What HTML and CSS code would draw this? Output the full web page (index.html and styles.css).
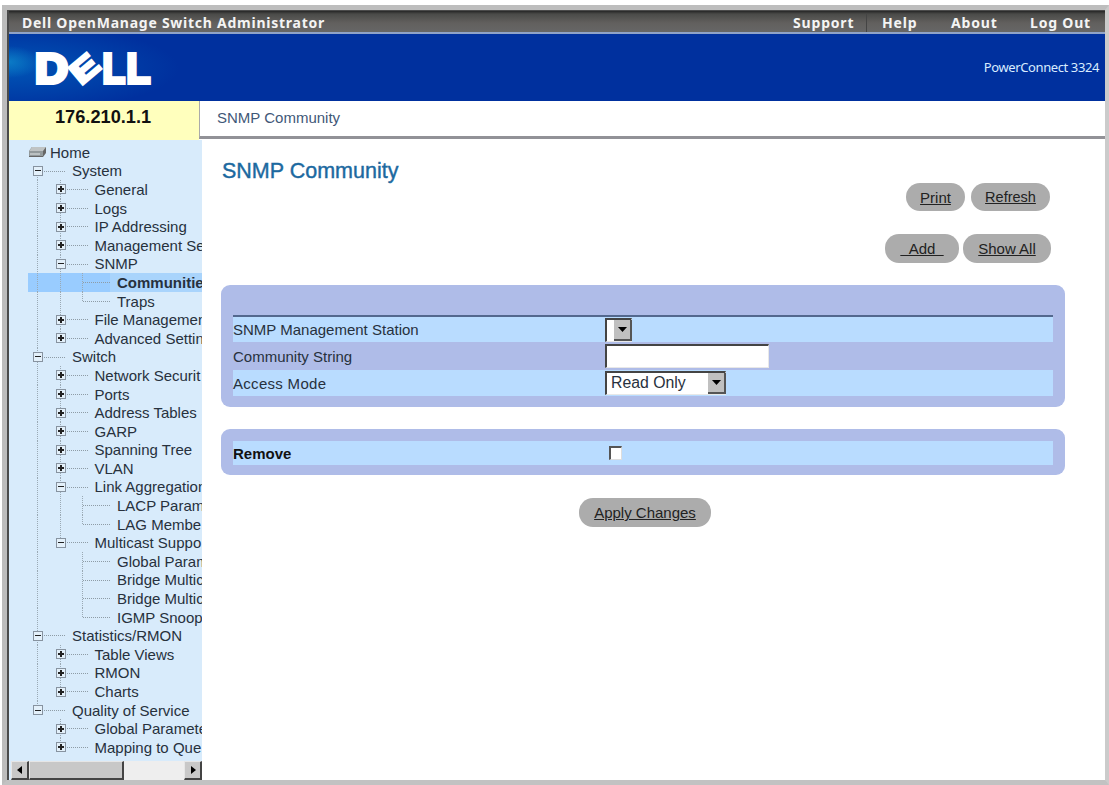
FILE: index.html
```html
<!DOCTYPE html>
<html lang="en">
<head>
    <meta charset="utf-8">
    <title>Dell OpenManage Switch Administrator</title>
    <link rel="stylesheet" href="styles.css">
</head>
<body>
    <div class="window">
        <div class="topbar">
            <span class="app-name">Dell OpenManage Switch Administrator</span>
            <div class="top-links">
                <a class="link-support">Support</a>
                <a class="link-help">Help</a>
                <a class="link-about">About</a>
                <a class="link-logout">Log Out</a>
            </div>
        </div>

        <div class="banner">
            <svg class="logo" width="120" height="40" viewBox="0 0 120 40">
                <text x="0.9" y="35" textLength="33" lengthAdjust="spacingAndGlyphs">D</text>
                <g transform="translate(51 20.5) rotate(-40)">
                    <text class="logo-e" x="-14" y="10.5" textLength="27" lengthAdjust="spacingAndGlyphs">E</text>
                </g>
                <text x="68.5" y="35" textLength="22.5" lengthAdjust="spacingAndGlyphs">L</text>
                <text x="92.4" y="35" textLength="23.7" lengthAdjust="spacingAndGlyphs">L</text>
            </svg>
            <span class="model">PowerConnect 3324</span>
        </div>

        <div class="address-row">
            <div class="ip">176.210.1.1</div>
            <div class="breadcrumb">SNMP Community</div>
        </div>

        <div class="main">
            <div class="sidebar">
                <div class="tree">
                    <div class="row home">
                        <svg width="19" height="12" viewBox="0 0 19 12">
                            <path d="M4 1h14v6l-3 4H1V5z" fill="#666"/>
                            <path d="M4 1h14l-3 4H1z" fill="#bfc3c4"/>
                            <path d="M1 5h14v5H1z" fill="#92999b"/>
                            <path d="M2 8h10" stroke="#e4e8e8"/>
                        </svg>
                        <span>Home</span>
                    </div>
                    <div class="row"><i class="node minus first"></i>System</div>
                    <div class="row"><i class="guide"></i><i class="node plus"></i>General</div>
                    <div class="row"><i class="guide"></i><i class="node plus"></i>Logs</div>
                    <div class="row"><i class="guide"></i><i class="node plus"></i>IP Addressing</div>
                    <div class="row"><i class="guide"></i><i class="node plus"></i>Management Security</div>
                    <div class="row"><i class="guide"></i><i class="node minus"></i>SNMP</div>
                    <div class="row selected"><i class="guide"></i><i class="guide"></i><i class="node"></i>Communities</div>
                    <div class="row"><i class="guide"></i><i class="guide"></i><i class="node last"></i>Traps</div>
                    <div class="row"><i class="guide"></i><i class="node plus"></i>File Management</div>
                    <div class="row"><i class="guide"></i><i class="node plus last"></i>Advanced Settings</div>
                    <div class="row"><i class="node minus"></i>Switch</div>
                    <div class="row"><i class="guide"></i><i class="node plus"></i>Network Securit</div>
                    <div class="row"><i class="guide"></i><i class="node plus"></i>Ports</div>
                    <div class="row"><i class="guide"></i><i class="node plus"></i>Address Tables</div>
                    <div class="row"><i class="guide"></i><i class="node plus"></i>GARP</div>
                    <div class="row"><i class="guide"></i><i class="node plus"></i>Spanning Tree</div>
                    <div class="row"><i class="guide"></i><i class="node plus"></i>VLAN</div>
                    <div class="row"><i class="guide"></i><i class="node minus"></i>Link Aggregation</div>
                    <div class="row"><i class="guide"></i><i class="guide"></i><i class="node"></i>LACP Parameters</div>
                    <div class="row"><i class="guide"></i><i class="guide"></i><i class="node last"></i>LAG Membe</div>
                    <div class="row"><i class="guide"></i><i class="node minus last"></i>Multicast Suppo</div>
                    <div class="row"><i class="guide"></i><i class="guide blank"></i><i class="node"></i>Global Parameters</div>
                    <div class="row"><i class="guide"></i><i class="guide blank"></i><i class="node"></i>Bridge Multicast</div>
                    <div class="row"><i class="guide"></i><i class="guide blank"></i><i class="node"></i>Bridge Multicast</div>
                    <div class="row"><i class="guide"></i><i class="guide blank"></i><i class="node last"></i>IGMP Snooping</div>
                    <div class="row"><i class="node minus"></i>Statistics/RMON</div>
                    <div class="row"><i class="guide"></i><i class="node plus"></i>Table Views</div>
                    <div class="row"><i class="guide"></i><i class="node plus"></i>RMON</div>
                    <div class="row"><i class="guide"></i><i class="node plus last"></i>Charts</div>
                    <div class="row"><i class="node minus last"></i>Quality of Service</div>
                    <div class="row"><i class="guide blank"></i><i class="node plus"></i>Global Parameters</div>
                    <div class="row"><i class="guide blank"></i><i class="node plus last"></i>Mapping to Que</div>
                </div>
                <div class="scrollbar">
                    <span class="scroll-btn"><svg width="6" height="8"><path d="M5 0v8L0 4z"/></svg></span>
                    <span class="scroll-thumb"></span>
                    <span class="scroll-btn scroll-right"><svg width="6" height="8"><path d="M1 0v8l5-4z"/></svg></span>
                </div>
            </div>

            <div class="content">
                <h1>SNMP Community</h1>
                <div class="actions">
                    <a class="btn btn-print">Print</a>
                    <a class="btn btn-refresh">Refresh</a>
                </div>
                <div class="actions actions-second">
                    <a class="btn btn-add">&nbsp;&nbsp;Add&nbsp;&nbsp;</a>
                    <a class="btn btn-show">Show All</a>
                </div>

                <div class="panel panel-form">
                    <div class="field light">
                        <label>SNMP Management Station</label>
                        <div class="select select-station">
                            <span class="arrow"><svg width="9" height="5"><path d="M0 0h9L4.5 5z"/></svg></span>
                        </div>
                    </div>
                    <div class="field field-string">
                        <label for="community">Community String</label>
                        <input type="text" id="community">
                    </div>
                    <div class="field light field-mode">
                        <label>Access Mode</label>
                        <div class="select select-mode">
                            <span class="value">Read Only</span>
                            <span class="arrow"><svg width="9" height="5"><path d="M0 0h9L4.5 5z"/></svg></span>
                        </div>
                    </div>
                </div>

                <div class="panel panel-remove">
                    <div class="field light">
                        <label for="remove">Remove</label>
                        <input type="checkbox" id="remove">
                    </div>
                </div>

                <div class="apply">
                    <a class="btn btn-apply">Apply Changes</a>
                </div>
            </div>
        </div>
    </div>
</body>
</html>
```
FILE: styles.css
```css
*,
*::before {
    box-sizing: border-box;
}

body {
    margin: 0;
    padding-top: 5px;
    height: 785px;
    overflow: hidden;
    background-color: #fff;
    font-family: "Liberation Sans", Arial, sans-serif;
    font-size: 15px;
    color: #27313d;
}

.window {
    height: 780px;
    margin-left: 2px;
    border-style: solid;
    border-color: #bdbdbd #cbcbcb #c2c2c2 #bcbcbc;
    border-width: 5px 4px 5px 5px;
    box-shadow: inset 2px 2px 0 #4a4a4a;
    padding: 1px 0 0 2px;
    display: flex;
    flex-direction: column;
}

/* header */
.topbar {
    height: 23px;
    flex: none;
    display: flex;
    justify-content: space-between;
    align-items: center;
    padding: 0 14px 1px 13px;
    background: linear-gradient(#262626 0, #4a4a48 3px, #62605e 12px, #666 21px, #8fa3c8 21px);
    color: #f4f4f4;
    font-family: "Noto Sans", sans-serif;
    font-size: 14px;
    font-weight: bold;
}

.app-name {
    letter-spacing: 0.75px;
}

.top-links {
    display: flex;
    letter-spacing: 0.8px;
}

.link-support {
    width: 74px;
    border-right: 1px solid #444;
}

.link-help {
    width: 84px;
    padding-left: 15px;
}

.link-about {
    width: 79px;
}

.banner {
    height: 67px;
    flex: none;
    display: flex;
    justify-content: space-between;
    align-items: center;
    padding: 0 6px 0 25px;
    background:
        radial-gradient(ellipse 32px 16px at 0 28px, #0b7bc6, rgba(0, 90, 190, 0)),
        radial-gradient(ellipse 170px 44px at 0 34px, rgba(0, 105, 195, 0.65), rgba(0, 48, 158, 0)),
        #00309e;
}

.logo {
    overflow: visible;
}

.logo text {
    font-size: 42px;
    font-weight: bold;
    fill: #fff;
    stroke: #fff;
    stroke-width: 4px;
}

.logo .logo-e {
    font-size: 31px;
    stroke-width: 3px;
}

.model {
    color: #d9ecff;
    font-family: "Noto Sans", sans-serif;
    font-size: 13px;
    letter-spacing: -0.4px;
    margin-top: -2px;
}

.address-row {
    height: 39px;
    flex: none;
    display: flex;
}

.ip {
    width: 190px;
    padding: 6px 0 0 46px;
    background-color: #ffffbd;
    color: #111;
    font-size: 18.2px;
    font-weight: bold;
}

.breadcrumb {
    flex: 1;
    height: 38px;
    padding: 8px 0 0 17px;
    border-left: 1px solid #aaa;
    border-bottom: 3px solid #929297;
    color: #3f5878;
}

.main {
    flex: 1;
    display: flex;
    min-height: 0;
}

/* navigation tree */
.sidebar {
    width: 193px;
    background-color: #d8ebfb;
    display: flex;
    flex-direction: column;
    justify-content: space-between;
}

.tree {
    padding: 3px 0 0 19px;
    overflow: hidden;
}

.row {
    height: 18.6px;
    display: flex;
    align-items: center;
    white-space: nowrap;
}

.home span {
    margin-left: 3px;
}

.selected {
    font-weight: bold;
    background: linear-gradient(#99ccff, #99ccff) no-repeat 0 0 / 82px 100%, #a9d4fc;
}

.guide {
    flex: none;
    width: 22.5px;
    height: 100%;
    background: repeating-linear-gradient(#9aa9b4 0 1px, transparent 1px 2px) no-repeat 9px 0 / 1px 100%;
}

.guide.blank {
    background: none;
}

.node {
    flex: none;
    width: 44px;
    height: 100%;
    display: flex;
    align-items: center;
    padding-left: 5px;
    background:
        repeating-linear-gradient(#9aa9b4 0 1px, transparent 1px 2px) no-repeat 9px 0 / 1px 100%,
        repeating-linear-gradient(90deg, #8e9ca6 0 1px, transparent 1px 2px) no-repeat 10px 9px / 28px 1px;
}

.node.last {
    background-size: 1px 50%, 28px 1px;
}

.node.first {
    background-position: 9px 9px, 10px 9px;
}

.minus::before,
.plus::before {
    content: "";
    width: 10px;
    height: 10px;
    border: 1px solid #8793a0;
    background: linear-gradient(#222, #222) no-repeat center / 6px 1px, #e3f0fa;
}

.plus::before {
    background:
        linear-gradient(#222, #222) no-repeat center / 6px 2px,
        linear-gradient(#222, #222) no-repeat center / 2px 6px,
        #e3f0fa;
}

.scrollbar {
    height: 19px;
    flex: none;
    display: flex;
    margin-left: 2px;
    background-color: #eee;
}

.scroll-btn,
.scroll-thumb {
    background-color: #c8c8c8;
    border: 1px solid #e6e6e6;
    border-right: 2px solid #444;
    border-bottom: 2px solid #444;
}

.scroll-btn {
    width: 18px;
    display: flex;
    align-items: center;
    justify-content: center;
}

.scroll-thumb {
    width: 95px;
}

.scroll-right {
    margin-left: auto;
}

/* page content */
.content {
    flex: 1;
    padding: 19px 40px 0 19px;
}

h1 {
    margin: 0 0 0 1px;
    height: 25px;
    line-height: 25px;
    font-size: 21.5px;
    font-weight: normal;
    color: #1c69a0;
    -webkit-text-stroke: 0.4px #1c69a0;
}

.actions {
    display: flex;
    justify-content: flex-end;
    gap: 6px;
    padding-right: 15px;
    margin-top: -1px;
}

.actions-second {
    margin-top: 23px;
    gap: 4px;
    padding-right: 14px;
}

.btn {
    height: 28px;
    display: flex;
    align-items: center;
    justify-content: center;
    border-radius: 14px;
    background-color: #acacac;
    color: #222;
    text-decoration: underline;
    cursor: pointer;
}

.btn-print {
    width: 59px;
}

.btn-refresh {
    width: 79px;
    font-size: 14.5px;
}

.btn-add {
    width: 74px;
    height: 29px;
}

.btn-show {
    width: 88px;
    height: 29px;
}

.btn-apply {
    width: 132px;
    height: 29px;
}

.panel {
    padding: 0 12px;
    border-radius: 9px;
    background-color: #afbce8;
}

.panel-form {
    height: 122px;
    margin-top: 22px;
    padding-top: 30px;
}

.panel-form .field:first-child {
    height: 27px;
    border-top: 2px solid #53688e;
}

.panel-remove {
    height: 46px;
    margin-top: 22px;
    padding-top: 12px;
}

.panel-remove .field {
    height: 24px;
    font-weight: bold;
    color: #111;
}

.field {
    display: flex;
    align-items: center;
}

.field label {
    width: 372px;
}

.light {
    background-color: #b9dcff;
}

.field-string {
    height: 28px;
}

.field-mode {
    height: 26px;
}

.field-mode label {
    letter-spacing: 0.3px;
}

.select,
input[type="text"] {
    height: 24px;
    border: 1px solid #e8e8e8;
    border-top: 2px solid #444;
    border-left: 2px solid #444;
    background-color: #fff;
}

input[type="text"] {
    width: 164px;
    padding: 0 4px;
    outline: none;
}

.select {
    display: flex;
}

.select-station {
    width: 27px;
}

.select-mode {
    width: 121px;
}

.value {
    padding-left: 4px;
    line-height: 20px;
    font-size: 15.8px;
}

.arrow {
    width: 18px;
    margin: 0 -1px 0 auto;
    display: flex;
    align-items: center;
    justify-content: center;
    background-color: #c0c0c0;
    border-right: 2px solid #555;
    border-bottom: 2px solid #555;
}

input[type="checkbox"] {
    appearance: none;
    width: 13px;
    height: 14px;
    margin: 0 0 0 4px;
    border: 1px solid #ddd;
    border-top: 2px solid #555;
    border-left: 2px solid #555;
    background-color: #fff;
}

.apply {
    margin: 23px 0 0 358px;
    display: flex;
}
```
